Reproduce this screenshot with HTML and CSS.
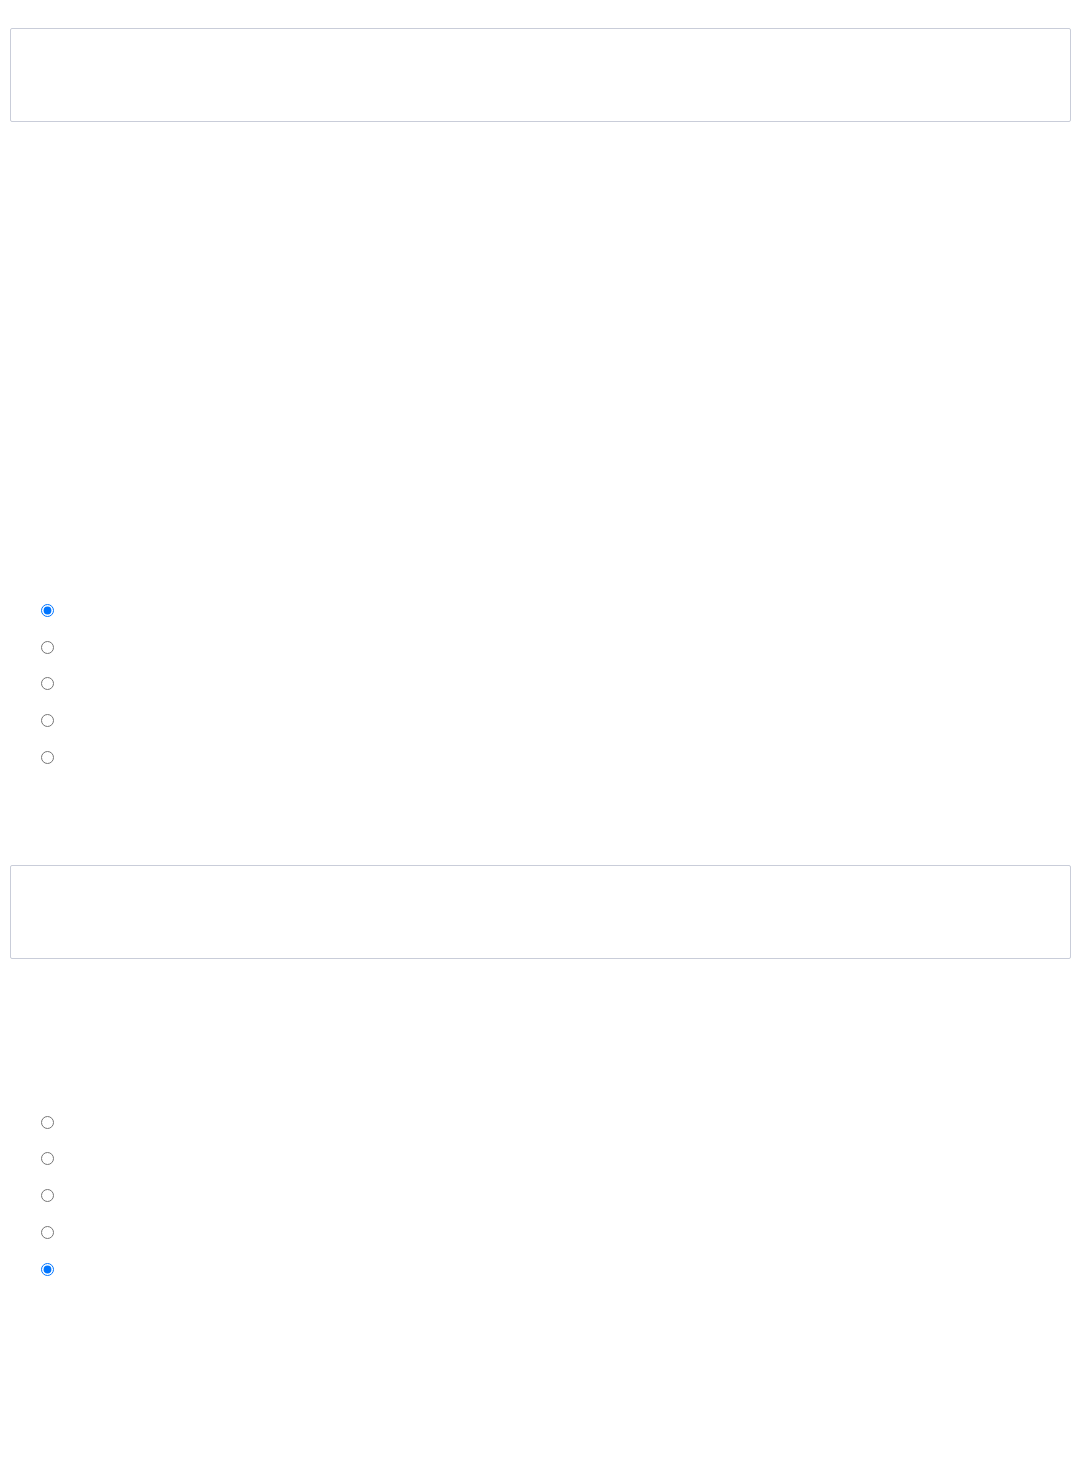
FILE: index.html
```html
<!DOCTYPE html>
<html lang="en">
<head>
<meta charset="utf-8">
<title>Form</title>
<link rel="stylesheet" href="styles.css">
</head>
<body>
  <div class="panel"></div>
  <div class="options first">
    <label class="option"><input type="radio" name="q1" checked></label>
    <label class="option"><input type="radio" name="q1"></label>
    <label class="option"><input type="radio" name="q1"></label>
    <label class="option"><input type="radio" name="q1"></label>
    <label class="option"><input type="radio" name="q1"></label>
  </div>
  <div class="panel second"></div>
  <div class="options third">
    <label class="option"><input type="radio" name="q2"></label>
    <label class="option"><input type="radio" name="q2"></label>
    <label class="option"><input type="radio" name="q2"></label>
    <label class="option"><input type="radio" name="q2"></label>
    <label class="option"><input type="radio" name="q2" checked></label>
  </div>
</body>
</html>
```
FILE: styles.css
```css
html, body {
  margin: 0;
  background: #ffffff;
  font-family: "Liberation Sans", Arial, sans-serif;
}
body {
  padding: 28px 8px 0 10px;
  min-height: 1480px;
  box-sizing: border-box;
}
.panel {
  height: 94px;
  box-sizing: border-box;
  border: 1px solid #c9cdd9;
  border-radius: 2px;
  background: #ffffff;
}
.second {
  margin-top: 89px;
}
.options {
  display: flex;
  flex-direction: column;
  padding-left: 31px;
}
.first {
  margin-top: 470px;
}
.third {
  margin-top: 145px;
}
.option {
  height: 36.75px;
  display: flex;
  align-items: center;
}
.option input {
  margin: 0;
  width: 13px;
  height: 13px;
}
```
